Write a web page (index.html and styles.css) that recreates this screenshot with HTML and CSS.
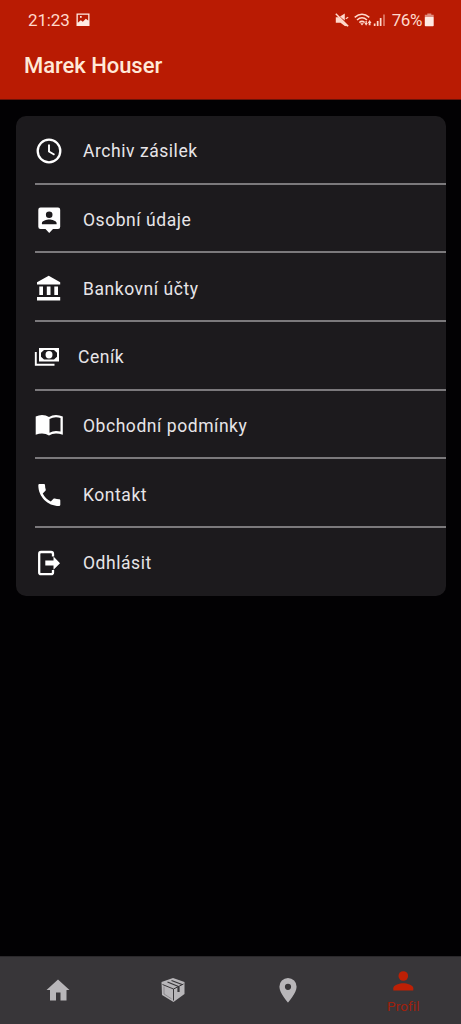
FILE: index.html
```html
<!DOCTYPE html>
<html lang="cs">
<head>
<meta charset="utf-8">
<title>Profil</title>
<link rel="stylesheet" href="styles.css">
</head>
<body>
<div class="app">
  <header class="header">
    <div class="status">
      <span class="time">21:23</span>
      <svg class="picture" width="14" height="14" viewBox="0 0 14 14"><path fill-rule="evenodd" d="M.5 .5h13v12.500H.5zM1.800 1.800v7.900l3-2.500 2 1.500 3-3 2.400 1.800V1.800zM4 3h1.700v1.700H4z"/></svg>
      <span class="spacer"></span>
      <svg class="mute" width="14" height="14" viewBox="0 0 14 14"><path d="M.8 4.200h3L13 13.200 9.800 13 5.500 9.800H.8zM5 3.500 9.800.600V7.500z"/><path d="m.8 .8 12.400 12.400" stroke="currentColor" stroke-width="1.500"/><path d="m10.800 5.800 2.400-1.500" stroke="currentColor" stroke-width="1.200"/></svg>
      <svg class="wifi" width="19" height="14" viewBox="0 0 19 14"><g fill="none" stroke="currentColor" stroke-width="1.500"><path d="M.7 4.400Q8 -2 15.300 4.400M3 7Q8 2.500 13 7M5.300 9.500Q8 7.200 10.700 9.500"/></g><path d="m6.200 10.300 1.800 2.200 1.800-2.200zM10.500 10h1V8h1.300v2h1l-1.700 2.800zM14.700 12.300V10h-1l1.900-3 1.900 3h-1v2.300z"/></svg>
      <svg class="signal" width="13" height="14" viewBox="0 0 13 14"><path d="M.8 10.500h1.700V13H.8zM3.800 8h1.700v5H3.800zM6.800 5h1.700v8H6.800z"/><path opacity=".55" d="M10.200 1.500h1.600V13h-1.600z"/></svg>
      <span class="percent">76%</span>
      <svg class="battery" width="11" height="14" viewBox="0 0 11 14"><path opacity=".55" d="M3.300.5h4v1.300h2.400v3H.8v-3h2.500z"/><rect x=".8" y="4" width="8.900" height="9.300" rx=".8"/></svg>
    </div>
    <h1 class="name">Marek Houser</h1>
  </header>

  <main class="content">
    <nav class="card">
      <a class="row"><svg class="icon" viewBox="0 0 30 30"><circle cx="15" cy="15" r="11.300" fill="none" stroke="currentColor" stroke-width="2.300"/><path d="M15 8.500V15.500L20.500 18.800" fill="none" stroke="currentColor" stroke-width="1.900"/></svg><span>Archiv zásilek</span></a>
      <a class="row"><svg class="icon" viewBox="0 0 30 30"><path fill-rule="evenodd" d="M6.500 2.500h17.500q2.200 0 2.200 2.200v17q0 2.200-2.200 2.200h-5L15.200 28 11.500 23.900h-5q-2.200 0-2.200-2.200v-17q0-2.200 2.200-2.200zM15.200 6.400a3.300 3.300 0 1 0 0 6.600 3.300 3.300 0 0 0 0-6.600zM7.900 19.300h14.700v-1.100c0-2.400-4.900-3.700-7.350-3.700s-7.350 1.300-7.350 3.700z"/></svg><span>Osobní údaje</span></a>
      <a class="row"><svg class="icon" viewBox="0 0 30 30"><path d="m14.700 1.800 11.500 6.400v2.300H3V8.200zM5.300 12.500h3.700v8.500H5.300zM12.800 12.500h3.700v8.500h-3.700zM20.300 12.500h3.700v8.500h-3.700zM3 23h23.200v3.600H3z"/></svg><span>Bankovní účty</span></a>
      <a class="row price"><svg class="icon" viewBox="0 0 30 30"><path fill-rule="evenodd" d="M5 6h20v13.500H5zM10 8 7 10.800v3.900l3 2.800h10l3-2.800v-3.900L20 8z"/><ellipse cx="15" cy="12.700" rx="3.500" ry="3.700"/><path d="M1.800 10v12.700H20.500" fill="none" stroke="currentColor" stroke-width="1.900"/></svg><span>Ceník</span></a>
      <a class="row"><svg class="icon" viewBox="0 0 30 30"><path fill-rule="evenodd" d="M15 6q-3-2-7-2-3.200 0-6.300 1.500v18.200Q5 22.500 8 22.500q4 0 7 2 3-2 7-2 3 0 6.800 1.200V5.500Q25.500 4 22 4q-4 0-7 2zM26.500 7v13.600q-2-.5-4.500-.5-3.500 0-6.500 1.700V8q3-1.700 6.500-1.700 2.500 0 4.500.7z"/></svg><span>Obchodní podmínky</span></a>
      <a class="row"><svg class="icon" viewBox="0 0 30 30"><path transform="translate(.65 .3) scale(1.222)" d="M6.620 10.790c1.440 2.830 3.760 5.140 6.590 6.590l2.200-2.200c.27-.27.67-.36 1.020-.24 1.120.37 2.330.57 3.570.57.55 0 1 .45 1 1V20c0 .55-.45 1-1 1-9.390 0-17-7.610-17-17 0-.55.45-1 1-1h3.500c.55 0 1 .45 1 1 0 1.250.2 2.450.57 3.570.11.35.03.74-.25 1.020l-2.200 2.200z"/></svg><span>Kontakt</span></a>
      <a class="row"><svg class="icon" viewBox="0 0 30 30"><path d="M19 8.500V6q0-2-2-2H7Q5.200 4 5.200 6v18.200q0 2 1.800 2h10q2 0 2-2V22" fill="none" stroke="currentColor" stroke-width="2.300"/><path d="M11.300 12.500h8.200V8.500L26 15.200l-6.500 6.600V17.600h-8.200z"/></svg><span>Odhlásit</span></a>
    </nav>
  </main>

  <nav class="tabs">
    <a class="tab"><svg width="26" height="26" viewBox="0 0 26 26"><path d="M13 2.500 24.500 13H21.500v10.500h-6V15.500h-4.500v8H5V13H1.500z"/></svg></a>
    <a class="tab"><svg width="26" height="26" viewBox="0 0 26 26"><path d="M13 1 24.500 5V17L13.500 25 2 18 1.500 5z"/><g fill="none" stroke="#383639"><path d="M2.500 7.500 13.500 12 23.500 7M13.500 12V23.500" stroke-width="1"/><path d="M7.500 5 18.500 9.500M11.500 3.500 22 7.500" stroke-width="1.300"/><path d="M18.500 9.500v5.500" stroke-width="2.200"/><path d="M4 9.500v7.500l7.500 4.800" opacity=".35"/></g></svg></a>
    <a class="tab"><svg width="26" height="26" viewBox="0 0 26 26"><path fill-rule="evenodd" d="M13 1a8.600 8.600 0 0 0-8.600 8.700C4.400 16 13 25.500 13 25.500s8.600-9.500 8.600-15.800A8.600 8.600 0 0 0 13 1zM13 6.700a3.100 3.100 0 1 1 0 6.200 3.100 3.100 0 0 1 0-6.200z"/></svg></a>
    <a class="tab active"><svg width="26" height="22" viewBox="0 0 26 22"><circle cx="13.300" cy="6" r="4.800"/><path d="M3.300 20.500v-2.300c0-3.300 6.600-5 10-5s10 1.700 10 5v2.300z"/></svg><span class="label">Profil</span></a>
  </nav>
</div>
</body>
</html>
```
FILE: styles.css
```css
* { box-sizing: border-box; }
body { margin: 0; background: #020103; font-family: Roboto, "Noto Sans", sans-serif; }
svg { display: block; flex: none; fill: currentColor; }
.app { height: 1024px; display: flex; flex-direction: column; }

.header { height: 100px; flex: none; background: #b91b03; border-bottom: 1px solid #6b1208; }
.status { display: flex; align-items: center; height: 40px; padding: 0 26px 0 28px; color: #ffd9cc; font-size: 17px; }
.time { letter-spacing: -.15px; }
.picture { margin-left: 6px; color: #ffece4; }
.spacer { flex: 1; }
.wifi { margin-left: 5px; }
.signal { margin-left: 0; }
.percent { margin-left: 6px; letter-spacing: -.4px; }
.battery { margin-left: 2px; color: #ffeae3; }
.name { margin: 0; padding-left: 24px; font-size: 22px; line-height: 52px; font-weight: 500; color: #ffe9d8; letter-spacing: -.04px; }

.content { flex: 1; padding: 16px 15px 0 16px; }
.card { height: 480px; border-radius: 10px; background: #1c1a1d; display: grid; grid-template-rows: repeat(7, 68.700px); overflow: hidden; }
.row { display: flex; align-items: center; gap: 19px; margin-left: 19px; padding-top: 4px; color: #fff; }
.row:not(:last-child) { border-bottom: 2px solid #7b797c; }
.row:first-child { padding-top: 3px; }
.row:last-child { padding-top: 1px; }
.row span { font-size: 17.500px; line-height: 24px; letter-spacing: .55px; color: #e7e5e8; }
.icon { width: 30px; height: 30px; margin-left: -1px; }
.price { gap: 14px; }

.tabs { height: 68px; flex: none; display: grid; grid-template-columns: repeat(4, 1fr); background: #383639; border-top: 1px solid #2a282b; }
.tab { display: flex; flex-direction: column; align-items: center; justify-content: center; padding-bottom: 2px; color: #b8b6b9; }
.active { padding: 3px 0 0; color: #bd2005; }
.label { margin-top: 5px; font-size: 13.500px; line-height: 18px; letter-spacing: .1px; color: #a0200c; }
```
